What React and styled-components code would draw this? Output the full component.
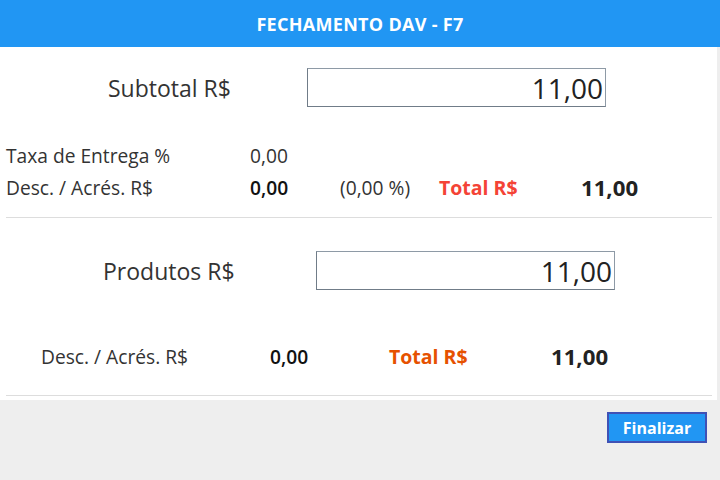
import React from "react";
import styled, { createGlobalStyle } from "styled-components";

const GlobalStyle = createGlobalStyle`
  html, body {
    margin: 0;
    padding: 0;
    background: #eeeeee;
    font-family: "Open Sans", "Liberation Sans", sans-serif;
  }
`;

const App = () => {
  return (
    <Page>
      <GlobalStyle />
      <Header>Fechamento DAV - F7</Header>

      <Panel>
        <Section top={21}>
          <MainRow labelWidth={301} indent={102}>
            <MainLabel>Subtotal R$</MainLabel>
            <ValueBox readOnly value="11,00" />
          </MainRow>

          <Summary columns="244px 90px 99px 142px auto" gapTop={32}>
            <Cell>Taxa de Entrega %</Cell>
            <Cell>0,00</Cell>
            <Cell />
            <Cell />
            <Cell />

            <Cell>Desc. / Acrés. R$</Cell>
            <Cell strong>0,00</Cell>
            <Cell>(0,00 %)</Cell>
            <TotalLabel color="#f44336">Total R$</TotalLabel>
            <TotalValue>11,00</TotalValue>
          </Summary>
        </Section>
        <Divider top={14} />

        <Section top={33}>
          <MainRow labelWidth={310} indent={97}>
            <MainLabel>Produtos R$</MainLabel>
            <ValueBox readOnly value="11,00" />
          </MainRow>

          <Summary columns="229px 119px 162px auto" gapTop={50} indent={35}>
            <Cell>Desc. / Acrés. R$</Cell>
            <Cell strong>0,00</Cell>
            <TotalLabel color="#e65100">Total R$</TotalLabel>
            <TotalValue>11,00</TotalValue>
          </Summary>
        </Section>
        <Divider top={23} />
      </Panel>

      <Footer>
        <FinishButton>Finalizar</FinishButton>
      </Footer>
    </Page>
  );
};

export default App;

const Page = styled.div`
  width: 720px;
  height: 480px;
  overflow: hidden;
  background: #eeeeee;
`;

const Header = styled.div`
  height: 47px;
  background: #2196f3;
  color: #ffffff;
  display: flex;
  align-items: center;
  justify-content: center;
  font-size: 18px;
  font-weight: 700;
  letter-spacing: 0.3px;
  text-transform: uppercase;
`;

const Panel = styled.div`
  width: 717px;
  box-sizing: border-box;
  background: #ffffff;
  padding: 0 5px 4px 6px;
`;

const Section = styled.div`
  padding-top: ${(props) => props.top}px;
`;

const MainRow = styled.div`
  display: grid;
  grid-template-columns: ${(props) => props.labelWidth}px 299px;
  align-items: center;
  height: 39px;
  div {
    padding-left: ${(props) => props.indent}px;
  }
`;

const MainLabel = styled.div`
  font-size: 23px;
  color: #333333;
  white-space: nowrap;
`;

const ValueBox = styled.input`
  box-sizing: border-box;
  width: 299px;
  height: 39px;
  margin: 0;
  padding: 0 2px 0 0;
  border: 1px solid #8e9aa6;
  border-left-color: #707c88;
  border-bottom-color: #707c88;
  border-radius: 0;
  outline: none;
  background: #ffffff;
  text-align: right;
  font-family: "Open Sans", "Liberation Sans", sans-serif;
  font-size: 28px;
  color: #222222;
`;

const Summary = styled.div`
  display: grid;
  grid-template-columns: ${(props) => props.columns};
  grid-auto-rows: 32px;
  align-items: center;
  margin-top: ${(props) => props.gapTop}px;
  padding-left: ${(props) => props.indent || 0}px;
`;

const Cell = styled.div`
  font-size: 19.2px;
  color: ${(props) => (props.strong ? "#111111" : "#333333")};
  font-weight: ${(props) => (props.strong ? 600 : 400)};
  white-space: nowrap;
`;

const TotalLabel = styled.div`
  font-size: 19.5px;
  font-weight: 700;
  color: ${(props) => props.color};
  white-space: nowrap;
`;

const TotalValue = styled.div`
  font-size: 22.2px;
  font-weight: 700;
  color: #222222;
  white-space: nowrap;
`;

const Divider = styled.div`
  height: 1px;
  background: #dddddd;
  margin-top: ${(props) => props.top}px;
`;

const Footer = styled.div`
  display: flex;
  justify-content: flex-end;
  padding: 12px 13px 0 0;
`;

const FinishButton = styled.button`
  box-sizing: border-box;
  width: 100px;
  height: 31px;
  background: #2196f3;
  border: 2px solid #3f51b5;
  color: #ffffff;
  font-family: "Open Sans", "Liberation Sans", sans-serif;
  font-size: 16px;
  font-weight: 700;
  cursor: pointer;
`;
